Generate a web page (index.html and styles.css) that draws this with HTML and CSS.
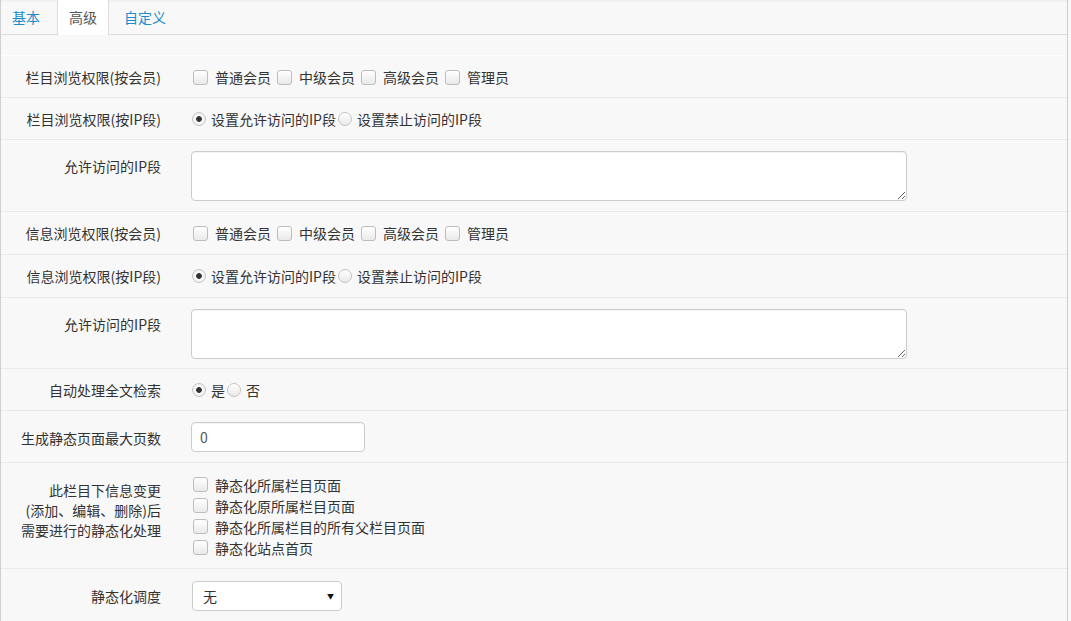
FILE: index.html
```html
<!DOCTYPE html>
<html lang="zh-CN">
<head>
<meta charset="utf-8">
<title>栏目设置</title>
<link rel="stylesheet" href="styles.css">
</head>
<body>
<div class="frame">
  <ul class="tabs">
    <li class="tab t1"><a href="#">基本</a></li>
    <li class="tab active"><a href="#">高级</a></li>
    <li class="tab t3"><a href="#">自定义</a></li>
  </ul>
  <div class="pane">
    <div class="row first">
      <div class="label">栏目浏览权限(按会员)</div>
      <div class="ctrl inline">
        <label class="opt"><input type="checkbox" class="cb">普通会员</label>
        <label class="opt"><input type="checkbox" class="cb">中级会员</label>
        <label class="opt"><input type="checkbox" class="cb">高级会员</label>
        <label class="opt"><input type="checkbox" class="cb">管理员</label>
      </div>
    </div>
    <div class="row">
      <div class="label">栏目浏览权限(按IP段)</div>
      <div class="ctrl inline">
        <label class="ropt"><input type="radio" name="r1" class="rd" checked>设置允许访问的IP段</label>
        <label class="ropt"><input type="radio" name="r1" class="rd">设置禁止访问的IP段</label>
      </div>
    </div>
    <div class="row ta-row tall">
      <div class="label ta-label">允许访问的IP段</div>
      <div class="ctrl"><textarea class="ta"></textarea></div>
    </div>
    <div class="row tall">
      <div class="label">信息浏览权限(按会员)</div>
      <div class="ctrl inline">
        <label class="opt"><input type="checkbox" class="cb">普通会员</label>
        <label class="opt"><input type="checkbox" class="cb">中级会员</label>
        <label class="opt"><input type="checkbox" class="cb">高级会员</label>
        <label class="opt"><input type="checkbox" class="cb">管理员</label>
      </div>
    </div>
    <div class="row tall">
      <div class="label">信息浏览权限(按IP段)</div>
      <div class="ctrl inline">
        <label class="ropt"><input type="radio" name="r2" class="rd" checked>设置允许访问的IP段</label>
        <label class="ropt"><input type="radio" name="r2" class="rd">设置禁止访问的IP段</label>
      </div>
    </div>
    <div class="row ta-row">
      <div class="label ta-label">允许访问的IP段</div>
      <div class="ctrl"><textarea class="ta"></textarea></div>
    </div>
    <div class="row">
      <div class="label">自动处理全文检索</div>
      <div class="ctrl inline">
        <label class="ropt"><input type="radio" name="r3" class="rd" checked>是</label>
        <label class="ropt"><input type="radio" name="r3" class="rd">否</label>
      </div>
    </div>
    <div class="row input-row">
      <div class="label in-label">生成静态页面最大页数</div>
      <div class="ctrl"><input type="text" class="txt" value="0"></div>
    </div>
    <div class="row stack-row">
      <div class="label multi">此栏目下信息变更<br>(添加、编辑、删除)后<br>需要进行的静态化处理</div>
      <div class="ctrl stack">
        <label class="opt"><input type="checkbox" class="cb">静态化所属栏目页面</label>
        <label class="opt"><input type="checkbox" class="cb">静态化原所属栏目页面</label>
        <label class="opt"><input type="checkbox" class="cb">静态化所属栏目的所有父栏目页面</label>
        <label class="opt"><input type="checkbox" class="cb">静态化站点首页</label>
      </div>
    </div>
    <div class="row select-row">
      <div class="label sel-label">静态化调度</div>
      <div class="ctrl">
        <div class="sel-wrap">
          <select class="sel"><option>无</option></select>
          <span class="arrow">▼</span>
        </div>
      </div>
    </div>
  </div>
</div>
</body>
</html>
```

FILE: styles.css
```css
html, body {
  margin: 0;
  padding: 0;
  background: #f8f8f8;
}

body {
  font-family: "Microsoft YaHei", "Noto Sans CJK SC", "Liberation Sans", sans-serif;
  font-size: 14px;
  color: #333;
}

.frame {
  width: 1066px;
  min-height: 621px;
  border-left: 1px solid #cfcfcf;
  border-right: 1px solid #cfcfcf;
  background: #f8f8f8;
}

.tabs {
  list-style: none;
  margin: 0;
  padding: 0;
  display: flex;
  height: 34px;
  border-bottom: 1px solid #dcdcdc;
  box-shadow: inset 0 3px 3px -2px rgba(0, 0, 0, 0.06);
}

.tab a {
  display: block;
  height: 34px;
  line-height: 34px;
  color: #1a8ccf;
  text-decoration: none;
}

.t1 a {
  padding: 0 17px 0 11px;
}

.t3 a {
  padding: 0 14px 0 15px;
}

.tab.active a {
  background: #fff;
  color: #555;
  border-left: 1px solid #dcdcdc;
  border-right: 1px solid #dcdcdc;
  height: 35px;
  margin-bottom: -1px;
  padding: 0 11px 0 11px;
}

.pane {
  padding-top: 20px;
}

.row {
  display: grid;
  grid-template-columns: 160px 1fr;
  column-gap: 30px;
  align-items: start;
  border-top: 1px solid #e9e9e9;
  padding: 10px 0 9px 0;
}

.row.first {
  border-top-color: #fdfdfd;
}

.row.tall {
  padding-bottom: 10px;
}

.label {
  text-align: right;
  line-height: 22px;
  white-space: nowrap;
}

.ta-label {
  padding-top: 5px;
}

.in-label {
  padding-top: 5px;
}

.sel-label {
  padding-top: 4px;
}

.multi {
  line-height: 20px;
  padding-top: 7px;
}

.ctrl {
  line-height: 22px;
}

.inline {
  display: flex;
  align-items: center;
  height: 22px;
}

.stack {
  display: flex;
  flex-direction: column;
  padding-top: 1px;
}

.stack-row {
  padding-bottom: 10px;
}

.stack .opt {
  height: 21px;
  margin-right: 0;
}

.opt {
  display: inline-flex;
  align-items: center;
  margin-right: 4px;
  cursor: pointer;
  white-space: nowrap;
}

.ropt {
  display: inline-flex;
  align-items: center;
  margin-right: 1px;
  cursor: pointer;
  white-space: nowrap;
}

.cb {
  appearance: none;
  -webkit-appearance: none;
  box-sizing: border-box;
  width: 15px;
  height: 15px;
  margin: 0 7px 0 2px;
  border: 1px solid #bdbdbd;
  border-radius: 3px;
  background: linear-gradient(#ffffff, #e9e9e9);
  flex: none;
}

.rd {
  appearance: none;
  -webkit-appearance: none;
  box-sizing: border-box;
  width: 14px;
  height: 14px;
  margin: 0 5px 0 1px;
  border: 1px solid #c4c4c4;
  border-radius: 50%;
  background: linear-gradient(#ffffff, #e9e9e9);
  flex: none;
}

.rd:checked {
  background: radial-gradient(circle, #333 0, #333 2.5px, #fafafa 3.2px, #e8e8e8 100%);
}

.ta {
  display: block;
  box-sizing: border-box;
  width: 716px;
  height: 50px;
  margin: 1px 0 0 0;
  border: 1px solid #ccc;
  border-radius: 4px;
  background: #fff;
  box-shadow: inset 0 1px 1px rgba(0, 0, 0, 0.05);
  font: inherit;
}

.input-row {
  padding-top: 11px;
  padding-bottom: 10px;
}

.txt {
  display: block;
  box-sizing: border-box;
  width: 174px;
  height: 30px;
  padding: 0 8px;
  border: 1px solid #ccc;
  border-radius: 4px;
  background: #fff;
  font: inherit;
  font-size: 14px;
  color: #555;
  box-shadow: inset 0 1px 1px rgba(0, 0, 0, 0.05);
}

.select-row {
  padding-top: 12px;
}

.sel-wrap {
  position: relative;
  width: 150px;
  margin-left: 1px;
}

.sel {
  appearance: none;
  -webkit-appearance: none;
  display: block;
  box-sizing: border-box;
  width: 150px;
  height: 30px;
  padding: 0 10px;
  border: 1px solid #ccc;
  border-radius: 4px;
  background: #fff;
  font: inherit;
  font-size: 14px;
  color: #333;
}

.arrow {
  position: absolute;
  right: 8px;
  top: 9px;
  font-size: 7px;
  line-height: 12px;
  color: #111;
  pointer-events: none;
}
```
